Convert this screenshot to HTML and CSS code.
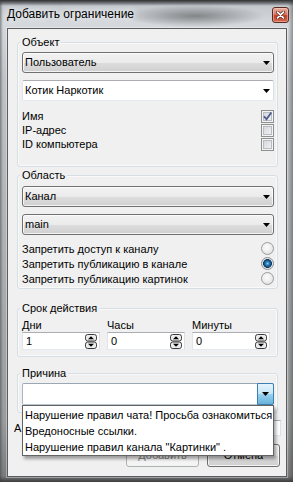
FILE: index.html
```html
<!DOCTYPE html>
<html lang="ru">
<head>
<meta charset="utf-8">
<title>Добавить ограничение</title>
<link rel="stylesheet" href="styles.css">
</head>
<body>
<div class="window">
  <div class="titlebar">
    <span class="title">Добавить ограничение</span>
    <span class="close">
      <svg width="9" height="8" viewBox="0 0 9 8"><path d="M1.5 1.2L7.5 6.8M7.5 1.2L1.5 6.8" stroke="#5b2a22" stroke-width="3.2" stroke-linecap="round"/><path d="M1.5 1.2L7.5 6.8M7.5 1.2L1.5 6.8" stroke="#fff" stroke-width="1.7" stroke-linecap="round"/></svg>
    </span>
  </div>
  <div class="client">
    <section class="group g-object">
      <div class="legend">Объект</div>
      <div class="combo combo-btn first"><span>Пользователь</span><svg class="arrow" width="7" height="4" viewBox="0 0 7 4"><path d="M0 0H7L3.5 4Z"/></svg></div>
      <div class="combo combo-edit next"><span>Котик Наркотик</span><svg class="arrow" width="7" height="4" viewBox="0 0 7 4"><path d="M0 0H7L3.5 4Z"/></svg></div>
      <div class="list checks">
        <div class="row"><span>Имя</span><span class="cb"><svg width="11" height="11" viewBox="0 0 11 11"><path d="M2 5.2L4.5 8.3L9.3 1.6" fill="none" stroke="#4a5b8c" stroke-width="1.8"/></svg></span></div>
        <div class="row"><span>IP-адрес</span><span class="cb"></span></div>
        <div class="row"><span>ID компьютера</span><span class="cb"></span></div>
      </div>
    </section>

    <section class="group g-scope">
      <div class="legend">Область</div>
      <div class="combo combo-btn first"><span>Канал</span><svg class="arrow" width="7" height="4" viewBox="0 0 7 4"><path d="M0 0H7L3.5 4Z"/></svg></div>
      <div class="combo combo-btn next"><span>main</span><svg class="arrow" width="7" height="4" viewBox="0 0 7 4"><path d="M0 0H7L3.5 4Z"/></svg></div>
      <div class="list radios">
        <div class="row r"><span>Запретить доступ к каналу</span><span class="radio"></span></div>
        <div class="row r"><span>Запретить публикацию в канале</span><span class="radio on"></span></div>
        <div class="row r"><span>Запретить публикацию картинок</span><span class="radio"></span></div>
      </div>
    </section>

    <section class="group g-time">
      <div class="legend">Срок действия</div>
      <div class="spins">
        <div class="spincol"><div class="slabel">Дни</div><div class="spin"><span>1</span><svg class="sbtn" width="12" height="15" viewBox="0 0 12 15"><rect x="0.5" y="0.5" width="11" height="6.5" rx="2.2" fill="#ececec" stroke="#3a3a3a"/><path d="M6 2.2L9 5.3H3Z"/><rect x="0.5" y="8" width="11" height="6.5" rx="2.2" fill="#ececec" stroke="#3a3a3a"/><path d="M3 9.7H9L6 12.8Z"/></svg></div></div>
        <div class="spincol"><div class="slabel">Часы</div><div class="spin"><span>0</span><svg class="sbtn" width="12" height="15" viewBox="0 0 12 15"><rect x="0.5" y="0.5" width="11" height="6.5" rx="2.2" fill="#ececec" stroke="#3a3a3a"/><path d="M6 2.2L9 5.3H3Z"/><rect x="0.5" y="8" width="11" height="6.5" rx="2.2" fill="#ececec" stroke="#3a3a3a"/><path d="M3 9.7H9L6 12.8Z"/></svg></div></div>
        <div class="spincol"><div class="slabel">Минуты</div><div class="spin"><span>0</span><svg class="sbtn" width="12" height="15" viewBox="0 0 12 15"><rect x="0.5" y="0.5" width="11" height="6.5" rx="2.2" fill="#ececec" stroke="#3a3a3a"/><path d="M6 2.2L9 5.3H3Z"/><rect x="0.5" y="8" width="11" height="6.5" rx="2.2" fill="#ececec" stroke="#3a3a3a"/><path d="M3 9.7H9L6 12.8Z"/></svg></div></div>
      </div>
    </section>

    <section class="group g-reason">
      <div class="legend">Причина</div>
      <div class="combo-wrap">
        <div class="combo combo-focus"><span class="caret"></span><span class="dd-btn"><svg width="7" height="4" viewBox="0 0 7 4"><path d="M0 0H7L3.5 4Z"/></svg></span></div>
        <ul class="popup">
          <li>Нарушение правил чата! Просьба ознакомиться</li>
          <li>Вредоносные ссылки.</li>
          <li>Нарушение правил канала "Картинки" .</li>
        </ul>
      </div>
    </section>

    <div class="extra"><span>А</span><span class="field"></span></div>

    <div class="buttons">
      <span class="btn disabled">Добавить</span>
      <span class="btn">Отмена</span>
    </div>
  </div>
</div>
</body>
</html>
```

FILE: styles.css
```css
* { box-sizing: border-box; }
html, body { margin: 0; padding: 0; }
body {
  width: 293px;
  height: 482px;
  overflow: hidden;
  font-family: "Liberation Sans", Arial, sans-serif;
  font-size: 11px;
  color: #000;
}

.window {
  width: 293px;
  height: 482px;
  display: flex;
  flex-direction: column;
  background:
    radial-gradient(ellipse 70px 11px at 195px 16px, rgba(70,70,70,.55), rgba(70,70,70,0)),
    linear-gradient(to right, rgba(60,60,60,.5) 0, rgba(60,60,60,0) 3px, rgba(0,0,0,0) 288px, rgba(60,60,60,.45) 293px),
    linear-gradient(to bottom, #2e2e2e 0, #6d7175 3px, #c3c8cd 6px, #d5d9dd 24px, #bfc3c7 80px, #aeb1b4 250px, #999b9d 420px, #7b7c7d 476px, #3c3c3c 482px);
}

.titlebar {
  height: 28px;
  flex: none;
  display: flex;
  justify-content: space-between;
  align-items: flex-start;
  padding: 0 4px 0 7px;
}
.title {
  margin-top: 6px;
  font-size: 12px;
  line-height: 16px;
  text-shadow: 0 0 6px rgba(255,255,255,.95), 0 0 10px rgba(255,255,255,.8);
}
.close {
  margin-top: 7px;
  width: 17px;
  height: 16px;
  border: 1px solid #5a2b22;
  border-radius: 3px;
  display: flex;
  align-items: center;
  justify-content: center;
  background: linear-gradient(#eab0a2 0, #d77762 45%, #c2402a 55%, #d46a50 100%);
  box-shadow: inset 0 0 0 1px rgba(255,220,210,.45);
}

.client {
  margin-left: 7px;
  width: 280px;
  height: 449px;
  flex: none;
  background: #f0f0f0;
  border: 1px solid #5a5c5e;
  box-shadow: 0 0 0 1px rgba(255,255,255,.35);
  display: flex;
  flex-direction: column;
}

.group {
  margin: 0 8px 0 9px;
  border: 1px solid #d5dfe5;
  border-radius: 3px;
  box-shadow: inset 0 0 0 1px rgba(255,255,255,.6);
  padding: 0 3px 0 4px;
}
.g-object { margin-top: 13px; padding-bottom: 15px; }
.g-scope { margin-top: 8px; padding-bottom: 2px; }
.g-time { margin-top: 19px; padding-bottom: 6px; }
.g-reason { margin-top: 16px; padding-bottom: 7px; }

.legend {
  width: max-content;
  margin: -8px 0 0 -2px;
  padding: 0 2px;
  height: 15px;
  line-height: 15px;
  background: #f0f0f0;
}

.combo {
  height: 21px;
  display: flex;
  align-items: center;
  justify-content: space-between;
  padding: 0 3px 0 2px;
  line-height: 15px;
}
.g-object .first { margin-top: 2px; }
.g-scope .first { margin-top: 3px; }
.next { margin-top: 7px; }
.combo-btn {
  border: 1px solid #707070;
  border-radius: 3px;
  background: linear-gradient(#f2f2f2 0, #ebebeb 50%, #dddddd 51%, #cfcfcf 100%);
  box-shadow: inset 0 0 0 1px rgba(255,255,255,.75);
}
.combo-edit {
  border: 1px solid;
  border-color: #abadb3 #dbdfe6 #e3e9ef #e2e3ea;
  border-radius: 2px;
  background: #fff;
}
.arrow { display: block; }

.list { display: flex; flex-direction: column; }
.checks { margin-top: 8px; }
.radios { margin-top: 6px; }
.row {
  height: 14px;
  display: flex;
  justify-content: space-between;
  align-items: center;
}
.row.r { height: 15px; }

.cb {
  width: 13px;
  height: 13px;
  border: 1px solid #8e8f8f;
  background: linear-gradient(135deg, #cdd1d6 0, #f7f7f7 100%);
  box-shadow: inset 0 0 0 1px #f4f4f4, inset 0 0 0 2px #b8bcc1;
  display: flex;
  align-items: center;
  justify-content: center;
}
.radio {
  width: 13px;
  height: 13px;
  border-radius: 50%;
  border: 1px solid #9c9c9c;
  background: radial-gradient(circle at 45% 40%, #fdfdfd 0, #efefef 45%, #d2d2d2 100%);
}
.radio.on {
  border-color: #8a8f94;
  background: radial-gradient(circle at 50% 50%, #7fd0f6 0, #2e86c6 1.6px, #16507f 3.3px, #0d3a5f 4.1px, #dcdcdc 4.7px, #f5f5f5 6px);
}

.spins {
  margin-top: 2px;
  display: grid;
  grid-template-columns: 78px 78px 78px;
  column-gap: 7px;
}
.slabel { height: 14px; line-height: 14px; }
.spin {
  height: 18px;
  border: 1px solid;
  border-color: #abadb3 #dbdfe6 #e3e9ef #e2e3ea;
  background: #fff;
  display: flex;
  align-items: center;
  justify-content: space-between;
  padding: 0 2px 0 3px;
}
.sbtn { display: block; }

.combo-wrap { position: relative; margin-top: 2px; }
.combo-focus {
  height: 22px;
  padding: 0;
  border: 1px solid #7f9db9;
  border-color: #9aa7b5 #a5b6c7 #b8c6d4 #a9b6c4;
  border-radius: 2px;
  background: #fff;
}
.dd-btn {
  margin: -1px -1px -1px 0;
  width: 17px;
  height: 22px;
  border: 1px solid #3c7fb1;
  border-radius: 0 2px 2px 0;
  background: linear-gradient(#e5f4fc 0, #c4e5f6 50%, #98d1ef 51%, #68b3db 100%);
  display: flex;
  align-items: center;
  justify-content: center;
}
.dd-btn svg { display: block; }

.popup {
  position: absolute;
  z-index: 10;
  left: 0;
  top: 100%;
  width: 252px;
  margin: 0;
  padding: 1px 0 0;
  list-style: none;
  background: #fff;
  border: 1px solid #646464;
  box-shadow: 2px 3px 3px rgba(0,0,0,.35);
}
.popup li {
  height: 16px;
  line-height: 16px;
  padding-left: 2px;
  white-space: nowrap;
}

.extra {
  margin: 7px 5px 0 6px;
  height: 16px;
  display: flex;
  justify-content: space-between;
  align-items: center;
}
.field {
  width: 60px;
  height: 16px;
  border: 1px solid;
  border-color: #abadb3 #dbdfe6 #e3e9ef #e2e3ea;
  background: #fff;
}

.buttons {
  margin: 8px 6px 0 0;
  display: flex;
  justify-content: flex-end;
  gap: 8px;
}
.btn {
  width: 73px;
  height: 23px;
  border: 1px solid #707070;
  border-radius: 3px;
  background: linear-gradient(#f2f2f2 0, #ebebeb 50%, #dddddd 51%, #cfcfcf 100%);
  box-shadow: inset 0 0 0 1px rgba(255,255,255,.75);
  display: flex;
  align-items: center;
  justify-content: center;
  line-height: 15px;
}
.btn.disabled {
  border-color: #adb2b5;
  background: #f4f4f4;
  box-shadow: none;
  color: #838383;
}
```
